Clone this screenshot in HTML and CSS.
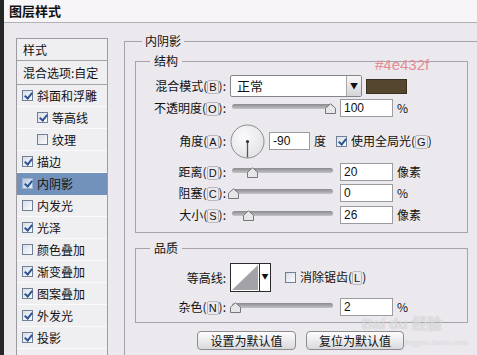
FILE: index.html
```html
<!DOCTYPE html>
<html lang="zh-CN">
<head>
  <meta charset="UTF-8">
  <title>图层样式</title>
  <link rel="stylesheet" href="styles.css">
</head>
<body>

  <div class="dialog">
    <div class="titlebar">图层样式</div>

    <div class="content">
      <ul class="styles">
        <li class="head">样式</li>
        <li class="head blend">混合选项:自定</li>
        <li><span class="cb on"></span>斜面和浮雕</li>
        <li class="sub"><span class="cb on"></span>等高线</li>
        <li class="sub"><span class="cb"></span>纹理</li>
        <li><span class="cb on"></span>描边</li>
        <li class="active"><span class="cb on"></span>内阴影</li>
        <li><span class="cb"></span>内发光</li>
        <li><span class="cb on"></span>光泽</li>
        <li><span class="cb"></span>颜色叠加</li>
        <li><span class="cb on"></span>渐变叠加</li>
        <li><span class="cb on"></span>图案叠加</li>
        <li><span class="cb on"></span>外发光</li>
        <li><span class="cb on"></span>投影</li>
        <li></li>
      </ul>

      <div class="main">
        <fieldset class="group">
          <legend>内阴影</legend>

          <fieldset class="box structure">
            <legend>结构</legend>

            <div class="row r-blend">
              <span class="lbl">混合模式(<u>B</u>):</span>
              <div class="select">
                <span class="select-text">正常</span>
                <span class="select-btn">&#9660;</span>
              </div>
              <span class="swatch"></span>
            </div>

            <div class="row r-opacity">
              <span class="lbl">不透明度(<u>O</u>):</span>
              <div class="slider">
                <div class="track"></div>
                <svg class="thumb" style="left:93px" width="11" height="11" viewBox="0 0 11 11"><path d="M0.5 10.5V5.2L5.5 0.8L10.5 5.2V10.5Z" fill="#e6e5e8" stroke="#77767a"/></svg>
              </div>
              <span class="num">100</span>
              <span class="unit">%</span>
            </div>

            <div class="row r-angle">
              <span class="lbl">角度(<u>A</u>):</span>
              <svg class="dial" width="35" height="35" viewBox="0 0 35 35">
                <defs>
                  <radialGradient id="dialFill" cx="0.4" cy="0.35" r="0.7">
                    <stop offset="0" stop-color="#fbfbfc"/>
                    <stop offset="1" stop-color="#e2e1e5"/>
                  </radialGradient>
                </defs>
                <circle cx="17.5" cy="17.5" r="16.5" fill="url(#dialFill)" stroke="#8c8b8f"/>
                <line x1="17.5" y1="17.5" x2="17.5" y2="33.5" stroke="#55545a" stroke-width="1.3"/>
                <circle cx="17.5" cy="17.5" r="1.6" fill="#333"/>
              </svg>
              <span class="num short">-90</span>
              <span class="unit">度</span>
              <span class="cb on global"></span>
              <span class="cb-text">使用全局光(<u>G</u>)</span>
            </div>

            <div class="row r-dist">
              <span class="lbl">距离(<u>D</u>):</span>
              <div class="slider">
                <div class="track"></div>
                <svg class="thumb" style="left:15px" width="11" height="11" viewBox="0 0 11 11"><path d="M0.5 10.5V5.2L5.5 0.8L10.5 5.2V10.5Z" fill="#e6e5e8" stroke="#77767a"/></svg>
              </div>
              <span class="num">20</span>
              <span class="unit">像素</span>
            </div>

            <div class="row r-choke">
              <span class="lbl">阻塞(<u>C</u>):</span>
              <div class="slider">
                <div class="track"></div>
                <svg class="thumb" style="left:-4px" width="11" height="11" viewBox="0 0 11 11"><path d="M0.5 10.5V5.2L5.5 0.8L10.5 5.2V10.5Z" fill="#e6e5e8" stroke="#77767a"/></svg>
              </div>
              <span class="num">0</span>
              <span class="unit">%</span>
            </div>

            <div class="row r-size">
              <span class="lbl">大小(<u>S</u>):</span>
              <div class="slider">
                <div class="track"></div>
                <svg class="thumb" style="left:11px" width="11" height="11" viewBox="0 0 11 11"><path d="M0.5 10.5V5.2L5.5 0.8L10.5 5.2V10.5Z" fill="#e6e5e8" stroke="#77767a"/></svg>
              </div>
              <span class="num">26</span>
              <span class="unit">像素</span>
            </div>
          </fieldset>

          <fieldset class="box quality">
            <legend>品质</legend>

            <div class="row r-contour">
              <span class="lbl">等高线:</span>
              <div class="contour">
                <svg width="28" height="27" viewBox="0 0 28 27"><path d="M1 26L27 1V26Z" fill="#a3a2a6"/></svg>
                <span class="contour-btn">&#9660;</span>
              </div>
              <span class="cb aa"></span>
              <span class="cb-text">消除锯齿(<u>L</u>)</span>
            </div>

            <div class="row r-noise">
              <span class="lbl">杂色(<u>N</u>):</span>
              <div class="slider">
                <div class="track"></div>
                <svg class="thumb" style="left:-2px" width="11" height="11" viewBox="0 0 11 11"><path d="M0.5 10.5V5.2L5.5 0.8L10.5 5.2V10.5Z" fill="#e6e5e8" stroke="#77767a"/></svg>
              </div>
              <span class="num">2</span>
              <span class="unit">%</span>
            </div>
          </fieldset>

          <div class="buttons">
            <span class="btn">设置为默认值</span>
            <span class="btn">复位为默认值</span>
          </div>
        </fieldset>
      </div>
    </div>

    <span class="note">#4e432f</span>
    <span class="watermark">Bai<b>du</b> 经验</span>
    <span class="watermark-url">jingyan.baidu.com</span>
  </div>

</body>
</html>
```

FILE: styles.css
```css
* {
  box-sizing: border-box;
}

body {
  margin: 0;
  font-family: "Noto Sans CJK SC", sans-serif;
  font-size: 12px;
  color: #111;
  background: #ebe9ed;
}

.dialog {
  position: relative;
  width: 477px;
  height: 355px;
  overflow: hidden;
  background: #ebe9ed;
  border-left: 4px solid #262626;
}

.titlebar {
  height: 23px;
  padding-left: 5px;
  line-height: 22px;
  font-size: 13px;
  font-weight: bold;
  background: #f7f5f8;
  border-bottom: 1px solid #b3b1b5;
}

.content {
  display: flex;
  align-items: flex-start;
}

/* left list of styles */
.styles {
  flex: none;
  width: 92px;
  margin: 15px 0 0 12px;
  padding: 0;
  list-style: none;
  background: #efeef1;
  border: 1px solid #9d9ba0;
}

.styles li {
  display: flex;
  align-items: center;
  gap: 4px;
  height: 22px;
  padding-left: 5px;
  line-height: 14px;
  border-bottom: 1px solid #fafafb;
}

.styles .head {
  padding-left: 6px;
  border-bottom-color: #a4a2a7;
}

.styles .blend {
  height: 24px;
}

.styles .sub {
  padding-left: 20px;
}

.styles .active {
  background: #7291bb;
  border-bottom-color: #7291bb;
}

.cb {
  position: relative;
  flex: none;
  display: inline-block;
  width: 11px;
  height: 11px;
  border: 1px solid #6f7f96;
  background: linear-gradient(135deg, #d9dee6, #fbfbfd);
}

.cb.on::after {
  content: "";
  position: absolute;
  left: 3px;
  top: 0;
  width: 3px;
  height: 6px;
  border: solid #2c5596;
  border-width: 0 2px 2px 0;
  transform: rotate(40deg);
}

.active .cb {
  border-color: #9fb4d3;
  background: linear-gradient(135deg, #b9c8de, #e9eef6);
}

/* main panel */
.main {
  flex: none;
  margin: 11px 0 0 16px;
}

fieldset {
  margin: 0;
  min-width: 0;
  border: 1px solid #a5a3a7;
}

legend {
  line-height: 14px;
}

.group {
  width: 370px;
  padding: 6px 0 30px 10px;
}

.group > legend {
  margin-left: 7px;
  padding: 0 3px;
}

.box {
  width: 333px;
  padding: 7px 0 8px 0;
}

.box > legend {
  margin-left: 14px;
  padding: 0 4px;
}

.quality {
  margin-top: 8px;
  padding: 8px 0 6px 0;
}

.row {
  display: flex;
  align-items: center;
  line-height: 14px;
  white-space: nowrap;
}

.lbl {
  flex: none;
  width: 90px;
  text-align: right;
}

.lbl u,
.cb-text u {
  text-decoration: none;
  border: 1px solid #b9b8bc;
  border-radius: 2px;
  font-family: "Liberation Sans", sans-serif;
  font-size: 11px;
  padding: 0 1px;
}

.r-blend {
  height: 22px;
}

.r-opacity {
  height: 18px;
  margin-top: 2px;
}

.r-angle {
  height: 34px;
  margin-top: 7px;
}

.r-dist {
  height: 18px;
  margin-top: 5px;
}

.r-choke {
  height: 18px;
  margin-top: 3px;
}

.r-size {
  height: 18px;
  margin-top: 4px;
}

.r-contour {
  height: 29px;
}

.r-noise {
  height: 18px;
  margin-top: 6px;
}

.select {
  display: flex;
  width: 132px;
  height: 22px;
  margin-left: 4px;
  background: #fff;
  border: 1px solid #85848a;
  border-radius: 2px;
}

.select-text {
  flex: 1;
  padding-left: 6px;
  line-height: 20px;
  font-size: 13px;
}

.select-btn {
  width: 15px;
  font-size: 8px;
  line-height: 20px;
  text-align: center;
  background: linear-gradient(#f7f7f8, #d5d4d8);
  border-left: 1px solid #a9a8ac;
}

.swatch {
  width: 41px;
  height: 15px;
  margin-left: 4px;
  background: #54462f;
  border: 1px solid #3a3022;
}

.slider {
  position: relative;
  flex: none;
  width: 101px;
  height: 11px;
  margin-left: 6px;
}

.track {
  height: 5px;
  margin-top: 1px;
  border-radius: 3px;
  background: linear-gradient(#8a898d, #c4c3c7);
}

.thumb {
  position: absolute;
  top: 0;
}

.num {
  width: 53px;
  height: 18px;
  margin-left: 7px;
  padding-left: 3px;
  font-family: "Liberation Sans", sans-serif;
  font-size: 12px;
  line-height: 16px;
  background: #fff;
  border: 1px solid #9c9ba0;
}

.num.short {
  width: 41px;
  margin-left: 4px;
}

.unit {
  margin-left: 4px;
}

.dial {
  margin-left: 4px;
}

.global {
  margin-left: 10px;
}

.cb-text {
  margin-left: 4px;
}

.contour {
  display: flex;
  width: 41px;
  height: 29px;
  margin-left: 4px;
  background: #fff;
  border: 1px solid #2b2b2d;
}

.contour svg {
  display: block;
}

.contour-btn {
  flex: 1;
  font-size: 7px;
  line-height: 24px;
  text-align: center;
  border-left: 1px solid #2b2b2d;
}

.aa {
  margin-left: 14px;
}

.buttons {
  display: flex;
  gap: 10px;
  margin: 8px 0 0 62px;
}

.btn {
  width: 99px;
  height: 19px;
  line-height: 17px;
  text-align: center;
  font-size: 12px;
  background: linear-gradient(#fdfdfd, #dad9dd);
  border: 1px solid #8c8b90;
  border-radius: 4px;
}

.btn + .btn {
  width: 98px;
}

/* overlays */
.note {
  position: absolute;
  left: 371px;
  top: 56px;
  font-family: "Liberation Sans", sans-serif;
  font-size: 15px;
  line-height: 17px;
  color: #e58c98;
}

.watermark {
  position: absolute;
  left: 358px;
  top: 316px;
  font-family: "Liberation Sans", sans-serif;
  font-size: 15px;
  line-height: 16px;
  font-weight: bold;
  color: rgba(255, 255, 255, 0.55);
  text-shadow: 0 0 1px rgba(110, 110, 115, 0.45);
}

.watermark b {
  margin-left: 4px;
}

.watermark-url {
  position: absolute;
  left: 400px;
  top: 338px;
  font-family: "Liberation Sans", sans-serif;
  font-size: 8px;
  line-height: 10px;
  color: rgba(255, 255, 255, 0.45);
  text-shadow: 0 0 1px rgba(110, 110, 115, 0.3);
}
```
